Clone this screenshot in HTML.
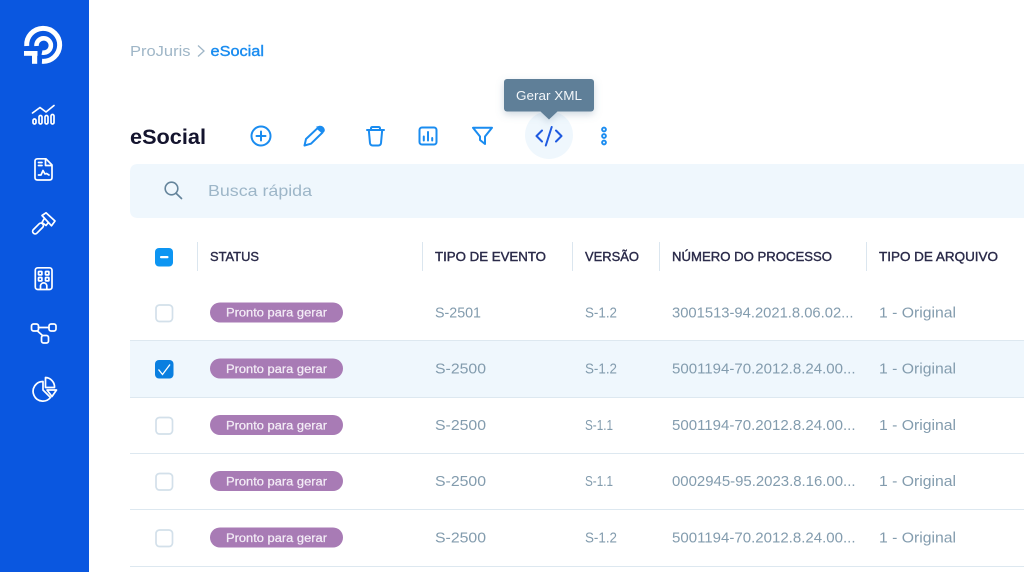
<!DOCTYPE html>
<html lang="pt-BR">
<head>
<meta charset="utf-8">
<title>eSocial</title>
<style>
html,body{margin:0;padding:0;background:#fff;width:1024px;height:572px;overflow:hidden}
svg{display:block}
text{font-family:"Liberation Sans",sans-serif}
.h{font-size:13px;fill:#2b2b4a;stroke:#2b2b4a;stroke-width:.4px}
.c{font-size:15px;fill:#839cae}
.p{font-size:11.5px;fill:#f3ecf6;stroke:#f3ecf6;stroke-width:.25px}
.s{fill:none;stroke:#fff;stroke-width:1.7;stroke-linecap:round;stroke-linejoin:round}
.b{fill:none;stroke:#1a8cf0;stroke-width:2;stroke-linecap:round;stroke-linejoin:round}
</style>
</head>
<body>
<svg width="1024" height="572" viewBox="0 0 1024 572" xmlns="http://www.w3.org/2000/svg">
<defs>
<filter id="sh" x="-20%" y="-30%" width="140%" height="170%"><feDropShadow dx="0" dy="3" stdDeviation="4" flood-color="#5f7f98" flood-opacity=".3"/></filter>
</defs>
<rect width="1024" height="572" fill="#fff"/>
<rect width="89" height="572" fill="#0a57e0"/>

<!-- logo -->
<g fill="none" stroke="#fff" stroke-width="5">
<path d="M26.700 46A16.500 16.500 0 1 1 42 61.300"/>
<path d="M36.500 46A7.200 7.200 0 1 1 42 52.500" stroke-width="4.600"/>
</g>
<rect x="24" y="51" width="13.500" height="4.800" fill="#fff"/>
<rect x="32" y="51" width="5.200" height="12.800" fill="#fff"/>

<!-- chart -->
<path class="s" d="M32.500 113L40 107.500L46 112L54 105.500"/>
<rect class="s" x="33" y="119" width="3" height="5" rx="1.500"/>
<rect class="s" x="39" y="115.500" width="3" height="8.500" rx="1.500"/>
<rect class="s" x="45" y="115.500" width="3" height="8.500" rx="1.500"/>
<rect class="s" x="51" y="114.500" width="3" height="9.500" rx="1.500"/>

<!-- document -->
<path class="s" d="M37.500 158.800H46L52 165V177.500Q52 180 49.500 180H37.500Q35 180 35 177.500V161.300Q35 158.800 37.500 158.800Z"/>
<path class="s" d="M45.500 159V165.500H51.500M38.500 162.500H42M38.500 165.500H42M38.500 175H41L43 170.500L45 174L46.500 173.500L49 175"/>

<!-- gavel -->
<path class="s" d="M42 215.500L46 212.800L55 221L51.500 225.800Z"/>
<path class="s" d="M44 219L42 222.500L46 225.500L48 223"/>
<rect class="s" x="31.500" y="226" width="13" height="5" rx="2.400" transform="rotate(-45 38 228.500)"/>

<!-- building -->
<rect class="s" x="35.300" y="267.800" width="16.700" height="21.700" rx="2.500"/>
<rect class="s" x="38.500" y="271.500" width="3.400" height="3.400" rx=".6"/>
<rect class="s" x="45.500" y="271.500" width="3.400" height="3.400" rx=".6"/>
<rect class="s" x="38.500" y="277.500" width="3.400" height="3.400" rx=".6"/>
<rect class="s" x="45.500" y="277.500" width="3.400" height="3.400" rx=".6"/>
<path class="s" d="M40.500 289V285.500A3.200 3.200 0 0 1 46.800 285.500V289"/>

<!-- network -->
<rect class="s" x="31.500" y="324" width="7" height="7" rx="2"/>
<rect class="s" x="49" y="324" width="7" height="7" rx="2"/>
<rect class="s" x="41.500" y="335.500" width="7" height="7.500" rx="2"/>
<path class="s" d="M38.500 327.500H49M37.500 331L42.500 335.500"/>

<!-- pie -->
<path class="s" d="M43 381.500A9.800 9.800 0 1 0 50.500 397.500L43 390Z"/>
<path class="s" d="M45.500 377.500A9.500 9.500 0 0 1 54.500 387.500H45.500Z"/>
<path class="s" d="M47 390H56.500L52 396.500Z"/>

<!-- breadcrumb -->
<text x="130" y="56" font-size="15" fill="#9fb6c7" textLength="60.500" lengthAdjust="spacingAndGlyphs">ProJuris</text>
<path d="M198 45.500L204 51L198 56.500" fill="none" stroke="#9fb6c7" stroke-width="1.300"/>
<text x="210.500" y="56" font-size="15" fill="#1a8cf0" stroke="#1a8cf0" stroke-width=".4" textLength="53.500" lengthAdjust="spacingAndGlyphs">eSocial</text>

<!-- title -->
<text x="130" y="144" font-size="21" font-weight="700" fill="#14142e" textLength="76" lengthAdjust="spacingAndGlyphs">eSocial</text>

<!-- toolbar icons -->
<circle class="b" cx="261" cy="136" r="9.500"/>
<path class="b" d="M256.500 136H265.500M261 131.500V140.500"/>

<path class="b" d="M304.500 145.500L306 139L317.500 128.200L322.500 132.500L311 143.700Z"/>
<path d="M316 126.800L319.500 125.800Q322 125.500 323.800 127.500Q325.300 129.500 324.500 131.500L323 133Z" fill="#1a8cf0"/>

<path class="b" d="M367 130H384M371 130V128.500Q371 127 372.500 127H378.500Q380 127 380 128.500V130M368.800 130L370 143Q370.300 145.500 372.800 145.500H378.200Q380.700 145.500 381 143L382.200 130"/>

<rect class="b" x="419.500" y="127.500" width="17" height="17" rx="2.500"/>
<path class="b" d="M423.800 140.500V136.500M428 140.500V132M432.200 140.500V138"/>

<path class="b" d="M473 127.800H492L485 136.500V144L480 140V136.500Z"/>

<circle cx="549" cy="135" r="24" fill="#eff7fd"/>
<path d="M542 130.500L536.500 136L542 141.500M556 130.500L561.500 136L556 141.500M551.700 127L545.800 145.500" fill="none" stroke="#1f5ae0" stroke-width="2" stroke-linecap="round" stroke-linejoin="round"/>

<g fill="none" stroke="#1a8cf0" stroke-width="1.900">
<circle cx="604" cy="129.500" r="1.900"/>
<circle cx="604" cy="136" r="1.900"/>
<circle cx="604" cy="142.500" r="1.900"/>
</g>

<!-- tooltip -->
<g filter="url(#sh)">
<rect x="504" y="79" width="90" height="32.500" rx="3" fill="#5f7f98"/>
<path d="M540.500 111.500H557.500L549 119.500Z" fill="#5f7f98"/>
</g>
<text x="516" y="100" font-size="13" fill="#f2f6f9" textLength="66" lengthAdjust="spacingAndGlyphs">Gerar XML</text>

<!-- search -->
<path d="M1024 164H138Q130 164 130 172V210Q130 218 138 218H1024Z" fill="#eff7fd"/>
<circle cx="171.500" cy="188.500" r="6.300" fill="none" stroke="#64849b" stroke-width="1.600"/>
<path d="M176.300 193.500L181.500 198.500" stroke="#64849b" stroke-width="1.700" stroke-linecap="round"/>
<text x="208" y="196" font-size="16" fill="#9db6c8" textLength="104" lengthAdjust="spacingAndGlyphs">Busca rápida</text>

<!-- table header -->
<rect x="155" y="248" width="18" height="18.500" rx="4" fill="#0d95f2"/>
<rect x="160" y="256" width="8.500" height="2.300" rx="1" fill="#fff"/>
<g stroke="#dbe6ef" stroke-width="1">
<path d="M197.500 242V271M422.500 242V271M572.500 242V271M659.500 242V271M866.500 242V271"/>
</g>
<text class="h" x="210" y="261" textLength="49" lengthAdjust="spacingAndGlyphs">STATUS</text>
<text class="h" x="435" y="261" textLength="111" lengthAdjust="spacingAndGlyphs">TIPO DE EVENTO</text>
<text class="h" x="585" y="261" textLength="54" lengthAdjust="spacingAndGlyphs">VERSÃO</text>
<text class="h" x="672" y="261" textLength="160" lengthAdjust="spacingAndGlyphs">NÚMERO DO PROCESSO</text>
<text class="h" x="879" y="261" textLength="119" lengthAdjust="spacingAndGlyphs">TIPO DE ARQUIVO</text>

<!-- rows -->
<rect x="130" y="341" width="894" height="56" fill="#eff7fd"/>
<path d="M130 340.500H1024M130 397.500H1024M130 453.500H1024M130 509.500H1024M130 566.500H1024" stroke="#dde8f0" stroke-width="1"/>

<!-- row 1 -->
<rect x="156" y="305" width="16.500" height="16.500" rx="3.500" fill="#fff" stroke="#d3e0ea" stroke-width="1.700"/>
<rect x="210" y="302.500" width="133" height="20" rx="10" fill="#a87bb5"/>
<text class="p" x="226" y="316.500" textLength="101" lengthAdjust="spacingAndGlyphs">Pronto para gerar</text>
<text class="c" x="435" y="317.500" textLength="46" lengthAdjust="spacingAndGlyphs">S-2501</text>
<text class="c" x="585" y="317.500" textLength="32" lengthAdjust="spacingAndGlyphs">S-1.2</text>
<text class="c" x="672" y="317.500" textLength="181.500" lengthAdjust="spacingAndGlyphs">3001513-94.2021.8.06.02...</text>
<text class="c" x="879" y="317.500" textLength="77" lengthAdjust="spacingAndGlyphs">1 - Original</text>

<!-- row 2 -->
<rect x="155" y="360" width="18.500" height="18.500" rx="4" fill="#0a7fe0"/>
<path d="M158.500 369.500L162.500 374.500L170 364.500" fill="none" stroke="#fff" stroke-width="1.300"/>
<rect x="210" y="358.500" width="133" height="20" rx="10" fill="#a87bb5"/>
<text class="p" x="226" y="373" textLength="101" lengthAdjust="spacingAndGlyphs">Pronto para gerar</text>
<text class="c" x="435" y="373.500" textLength="51" lengthAdjust="spacingAndGlyphs">S-2500</text>
<text class="c" x="585" y="373.500" textLength="32" lengthAdjust="spacingAndGlyphs">S-1.2</text>
<text class="c" x="672" y="373.500" textLength="183.500" lengthAdjust="spacingAndGlyphs">5001194-70.2012.8.24.00...</text>
<text class="c" x="879" y="373.500" textLength="77" lengthAdjust="spacingAndGlyphs">1 - Original</text>

<!-- row 3 -->
<rect x="156" y="417.500" width="16.500" height="16.500" rx="3.500" fill="#fff" stroke="#d3e0ea" stroke-width="1.700"/>
<rect x="210" y="415" width="133" height="20" rx="10" fill="#a87bb5"/>
<text class="p" x="226" y="429.500" textLength="101" lengthAdjust="spacingAndGlyphs">Pronto para gerar</text>
<text class="c" x="435" y="430" textLength="51" lengthAdjust="spacingAndGlyphs">S-2500</text>
<text class="c" x="585" y="430" textLength="28" lengthAdjust="spacingAndGlyphs">S-1.1</text>
<text class="c" x="672" y="430" textLength="183.500" lengthAdjust="spacingAndGlyphs">5001194-70.2012.8.24.00...</text>
<text class="c" x="879" y="430" textLength="77" lengthAdjust="spacingAndGlyphs">1 - Original</text>

<!-- row 4 -->
<rect x="156" y="473.500" width="16.500" height="16.500" rx="3.500" fill="#fff" stroke="#d3e0ea" stroke-width="1.700"/>
<rect x="210" y="471" width="133" height="20" rx="10" fill="#a87bb5"/>
<text class="p" x="226" y="485.500" textLength="101" lengthAdjust="spacingAndGlyphs">Pronto para gerar</text>
<text class="c" x="435" y="486" textLength="51" lengthAdjust="spacingAndGlyphs">S-2500</text>
<text class="c" x="585" y="486" textLength="28" lengthAdjust="spacingAndGlyphs">S-1.1</text>
<text class="c" x="672" y="486" textLength="183.500" lengthAdjust="spacingAndGlyphs">0002945-95.2023.8.16.00...</text>
<text class="c" x="879" y="486" textLength="77" lengthAdjust="spacingAndGlyphs">1 - Original</text>

<!-- row 5 -->
<rect x="156" y="530" width="16.500" height="16.500" rx="3.500" fill="#fff" stroke="#d3e0ea" stroke-width="1.700"/>
<rect x="210" y="527.500" width="133" height="20" rx="10" fill="#a87bb5"/>
<text class="p" x="226" y="542" textLength="101" lengthAdjust="spacingAndGlyphs">Pronto para gerar</text>
<text class="c" x="435" y="542.500" textLength="51" lengthAdjust="spacingAndGlyphs">S-2500</text>
<text class="c" x="585" y="542.500" textLength="32" lengthAdjust="spacingAndGlyphs">S-1.2</text>
<text class="c" x="672" y="542.500" textLength="183.500" lengthAdjust="spacingAndGlyphs">5001194-70.2012.8.24.00...</text>
<text class="c" x="879" y="542.500" textLength="77" lengthAdjust="spacingAndGlyphs">1 - Original</text>
</svg>
</body>
</html>
